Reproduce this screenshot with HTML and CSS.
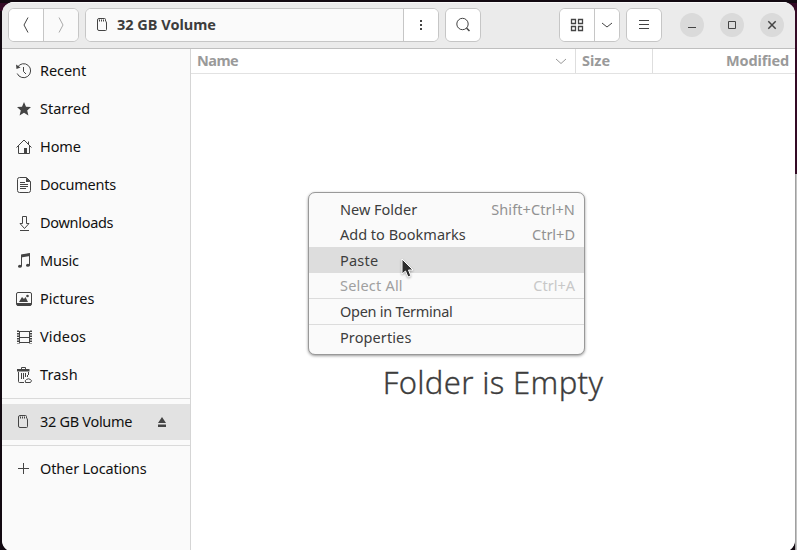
FILE: index.html
```
<!DOCTYPE html>
<html lang="en">
<head>
<meta charset="utf-8">
<title>32 GB Volume</title>
<link rel="stylesheet" href="styles.css">
</head>
<body>
<svg class="defs" width="0" height="0"><symbol id="sd" viewBox="0 0 16 16"><path d="M4 1.500h5.500q1 0 1 1v1.500q1 .7 1 2v6.500q0 1-1 1H4q-1.500 0-1.500-1.500V3q0-1.500 1.500-1.500zM4.500 2.500v2M6.500 2.500v2M8.500 2.500v2"/></symbol></svg>
<div class="desktop"></div>
<main class="window">
  <header class="headerbar">
    <div class="group nav">
      <button class="back"><svg class="ico" viewBox="0 0 16 16"><path d="M10 .5 6 8l4 7.500"/></svg></button>
      <button class="fwd"><svg class="ico" viewBox="0 0 16 16"><path d="M6 .5 10 8l-4 7.500"/></svg></button>
    </div>
    <div class="group path">
      <div class="crumb"><svg class="ico"><use href="#sd"/></svg><b>32 GB Volume</b></div>
      <button class="more"><svg class="ico solid" viewBox="0 0 16 16"><path d="M7 3h2v2H7zM7 7h2v2H7zM7 11h2v2H7z"/></svg></button>
    </div>
    <div class="group single"><button><svg class="ico" viewBox="0 0 16 16"><circle cx="7.500" cy="7" r="5.700"/><path class="thick" d="m11.500 11 3 3"/></svg></button></div>
    <div class="group view">
      <button class="grid"><svg class="ico grid-ico" viewBox="0 0 16 16"><path d="M2.500 2.500h4v4h-4zM9.500 2.500h4v4h-4zM2.500 9.500h4v4h-4zM9.500 9.500h4v4h-4z"/></svg></button>
      <button class="drop"><svg class="ico" viewBox="0 0 16 16"><path d="m3 6 5 4 5-4"/></svg></button>
    </div>
    <div class="group single menu-btn"><button><svg class="ico" viewBox="0 0 16 16"><path d="M3 3.500h10M3 7.500h10M3 11.500h10"/></svg></button></div>
    <div class="controls">
      <button><svg class="ico" viewBox="0 0 16 16"><path d="M4 10.500h8"/></svg></button>
      <button><svg class="ico" viewBox="0 0 16 16"><path d="M4.500 4.500h7v7h-7z"/></svg></button>
      <button><svg class="ico thick" viewBox="0 0 16 16"><path d="m4.300 4.300 7.400 7.400M11.700 4.300l-7.400 7.400"/></svg></button>
    </div>
  </header>
  <div class="body">
    <nav class="sidebar">
      <a class="row"><svg class="ico" viewBox="0 0 16 16"><path d="M1.500 4.300A7 7 0 1 1 1.200 10.500M7.500 4v4.500L10 11"/><path class="fill" d="M0 1.500 4.500 4.500 .5 6z"/></svg><span class="recent">Recent</span></a>
      <a class="row"><svg class="ico solid" viewBox="0 0 16 16"><path d="m8 1 2 4.700 5 .4-3.800 3.300 1.200 5.100L8 11.800l-4.400 2.700 1.200-5.100L1 6.100l5-.4z"/></svg><span class="starred">Starred</span></a>
      <a class="row"><svg class="ico" viewBox="0 0 16 16"><path d="M.5 8.500 8 1l7.500 7.500M2.500 7v7.500h11V7M12.500 5V2.500"/><path class="fill" d="M8 9h3v6H8z"/></svg><span class="home">Home</span></a>
      <a class="row"><svg class="ico" viewBox="0 0 16 16"><path d="M3.500.5h7l4 4v9q0 2-2 2h-9q-2 0-2-2v-11q0-2 2-2zM4 5.500h5M4 7.500h8M4 9.500h8M4 11.500h6"/><path class="fill" d="M10 .5V5h4.500z"/></svg><span class="documents">Documents</span></a>
      <a class="row"><svg class="ico" viewBox="0 0 16 16"><path d="M6.500 1.500h4v7H13l-4.500 5L4 8.500h2.500zM4 15.500h9"/></svg><span class="downloads">Downloads</span></a>
      <a class="row"><svg class="ico" viewBox="0 0 16 16"><path d="M5.500 13V2.500L13.500 1v11.500"/><path class="fill" d="M5 1.500 14 0v3L5 4.500z"/><ellipse class="fill" cx="3.900" cy="13.300" rx="1.900" ry="1.500"/><ellipse class="fill" cx="11.900" cy="12.300" rx="1.900" ry="1.500"/></svg><span class="music">Music</span></a>
      <a class="row"><svg class="ico" viewBox="0 0 16 16"><rect x=".5" y="1.500" width="15" height="13" rx="1.500"/><path class="fill" d="M1 12h14v2.500H1zM3 11l3-5 2 2 1.500-2L12 11z"/><circle class="fill" cx="11.500" cy="5" r="1.300"/></svg><span class="pictures">Pictures</span></a>
      <a class="row"><svg class="ico" viewBox="0 0 16 16"><path d="M3.500 2v12.500M13.500 2v12.500M3 2.500h11M3 8.500h11M3 13.500h11"/><path class="film" d="M2 1.500v13M15 1.500v13"/></svg><span class="videos">Videos</span></a>
      <a class="row"><svg class="ico" viewBox="0 0 16 16"><path d="M2.500 5v9.500q0 1 1 1H8M12.500 5v3M5.500 6v6M7.500 6v6M9.500 6v4M5.500 2V.500h4V2"/><path class="fill" d="M1 2h12.500v2.500H1z"/><path d="M11.500 8v2M9.500 15.500q-1-2 1-3 2-1.500 4 0 2 1 0 3z"/></svg><span class="trash">Trash</span></a>
      <hr>
      <a class="row active"><svg class="ico"><use href="#sd"/></svg><span class="volume">32 GB Volume</span><svg class="ico solid eject" viewBox="0 0 16 16"><path d="m8 3 4 6H4zM4 10.500h8V13H4z"/></svg></a>
      <hr class="low">
      <a class="row other-row"><svg class="ico" viewBox="0 0 16 16"><path d="M7.500 2v11M2 7.500h11"/></svg><span class="other">Other Locations</span></a>
    </nav>
    <section class="content">
      <div class="columns">
        <div class="col-name"><span>Name</span><svg class="ico" viewBox="0 0 16 16"><path d="m3 6 5 4.500L13 6"/></svg></div>
        <div class="col-size"><span>Size</span></div>
        <div class="col-mod"><span>Modified</span></div>
      </div>
      <div class="empty">Folder is Empty</div>
    </section>
  </div>
</main>
<div class="menu">
  <div class="item"><span class="m-new">New Folder</span><kbd class="k-new">Shift+Ctrl+N</kbd></div>
  <div class="item"><span class="m-add">Add to Bookmarks</span><kbd>Ctrl+D</kbd></div>
  <div class="item hover"><span class="m-paste">Paste</span></div>
  <div class="item disabled"><span class="m-select">Select All</span><kbd>Ctrl+A</kbd></div>
  <div class="item line"><span class="m-open">Open in Terminal</span></div>
  <div class="item line"><span class="m-prop">Properties</span></div>
</div>
<svg class="cursor" viewBox="0 0 14 20"><path d="M1 1v15l3.500-3 2.500 6 2.800-1.200L7.500 12H12z"/></svg>
</body>
</html>
```
FILE: styles.css
```
* { box-sizing: border-box; }
body { margin: 0; width: 797px; height: 550px; overflow: hidden; position: relative; background: #120911; font: 14.5px "Noto Sans", sans-serif; color: #111; }
.defs { position: absolute; }
.desktop { position: absolute; inset: 0; background: linear-gradient(90deg, #a0a0a0 50%, #c4c4c4 50%) 795px 174px / 2px 376px no-repeat, linear-gradient(#340a25, #340a25) 787px 3px / 10px 171px no-repeat, linear-gradient(#340a25, #340a25) 0 3px / 10px 8px no-repeat, #120911; }
.window { position: relative; width: 793px; height: 550px; margin: 2px 0 0 2px; border-radius: 12px; overflow: hidden; background: #fff; }
button { border: 0; padding: 0; background: #fff; display: flex; align-items: center; justify-content: center; height: 100%; }
.ico { width: 16px; height: 16px; flex: none; fill: none; stroke: #444; stroke-width: 1; overflow: visible; }
.ico .fill, .ico.solid { fill: #444; stroke: none; }
.thick { stroke-width: 1.500; }
.grid-ico { stroke-width: 1.300; }
.film { stroke-width: 2; stroke-dasharray: 1.500 1; }
.headerbar { height: 47px; background: #ebebeb; border-top: 1px solid #f8f8f8; border-bottom: 1px solid #bfbfbf; display: flex; align-items: flex-start; padding: 5px 0 0 6px; }
.group { height: 34px; border: 1px solid #c6c6c6; border-radius: 6px; display: flex; overflow: hidden; background: #fff; flex: none; }
.group > * + * { border-left: 1px solid #c6c6c6; }
.nav { width: 71px; margin-right: 6px; }
.back { width: 34px; }
.fwd { flex: 1; background: #fafafa; }
.fwd svg { stroke: #aaa; }
.path { width: 354px; margin-right: 6px; }
.crumb { flex: 1; display: flex; align-items: center; gap: 7px; padding-left: 8px; background: #fafafa; color: #3d3d3d; }
.crumb .ico { margin: 0 0 0 1px; }
.crumb b { margin: 0 0 2px -1px; }
.more { width: 35px; }
.single { width: 36px; }
.single button { width: 100%; }
.view { width: 61px; margin-left: 78px; margin-right: 6px; }
.grid { width: 34px; }
.drop { flex: 1; }
.controls { display: flex; gap: 16px; margin: 5px 0 0 18px; }
.controls button { width: 24px; height: 24px; border-radius: 50%; background: #dadada; }
.body { display: flex; height: 503px; }
.sidebar { width: 189px; background: #fafafa; border-right: 1px solid #d5d5d5; padding-top: 3px; }
.row { display: flex; align-items: center; height: 38px; padding-left: 14px; gap: 8px; white-space: nowrap; }
.row > span { margin-bottom: 2px; }
.row.active { height: 36px; background: #e2e2e2; }
.row.other-row { height: 36px; }
.recent, .home { letter-spacing: -.08px; }
.documents { letter-spacing: -.25px; }
.downloads, .volume { letter-spacing: -.3px; }
.music { letter-spacing: -.2px; }
.videos, .trash { letter-spacing: .15px; }
.other { letter-spacing: -.14px; }
.eject { margin-left: auto; margin-right: 20px; }
hr { border: 0; height: 1px; background: #dadada; margin: 4px 0 5px; }
hr.low { margin: 5px 0; }
.content { flex: 1; background: #fff; }
.columns { display: flex; height: 25px; border-bottom: 1px solid #e2e2e2; color: #9a9a9a; font-weight: 700; line-height: 22px; }
.columns > div { display: flex; align-items: center; padding: 0 6px; }
.columns span { margin-bottom: 2px; }
.columns .ico { stroke: #999; }
.col-name { width: 385px; justify-content: space-between; border-right: 1px solid #dedede; letter-spacing: -.6px; }
.col-name span { letter-spacing: -.6px; }
.col-name span { letter-spacing: -.5px; }
.col-size { width: 77px; border-right: 1px solid #dedede; }
.col-mod { flex: 1; justify-content: flex-end; letter-spacing: -.12px; }
.empty { margin-top: 286px; text-align: center; font-size: 31px; line-height: 44px; font-weight: 300; letter-spacing: .35px; color: #3d3d3d; -webkit-text-stroke: .3px #3d3d3d; }
.menu { position: absolute; left: 308px; top: 192px; width: 277px; height: 163px; padding: 4px 0; border: 1px solid #999; border-radius: 7px; background: #fafafa; box-shadow: 0 1px 3px rgba(0,0,0,.4); color: #3d3d3d; }
.item { display: flex; align-items: center; justify-content: space-between; height: 25px; padding: 0 9px 0 31px; white-space: nowrap; }
.item > * { margin-bottom: 2px; }
.item.hover > * { margin-bottom: 0; }
.item.hover { background: #ddd; height: 26px; }
.item.disabled { color: #a0a0a0; }
.item.line { border-top: 1px solid #dcdcdc; height: 26px; }
.m-paste, .m-select { letter-spacing: .2px; }
.m-open { letter-spacing: -.28px; }
.m-prop { letter-spacing: .1px; }
.k-new { letter-spacing: .1px; }
kbd { font: inherit; color: #929292; }
.disabled kbd { color: #c8c8c8; }
.cursor { position: absolute; left: 401px; top: 258px; width: 14px; height: 20px; fill: #2d2d2d; stroke: #fff; stroke-width: 1; filter: drop-shadow(0 1px 1px rgba(0,0,0,.3)); }
```
